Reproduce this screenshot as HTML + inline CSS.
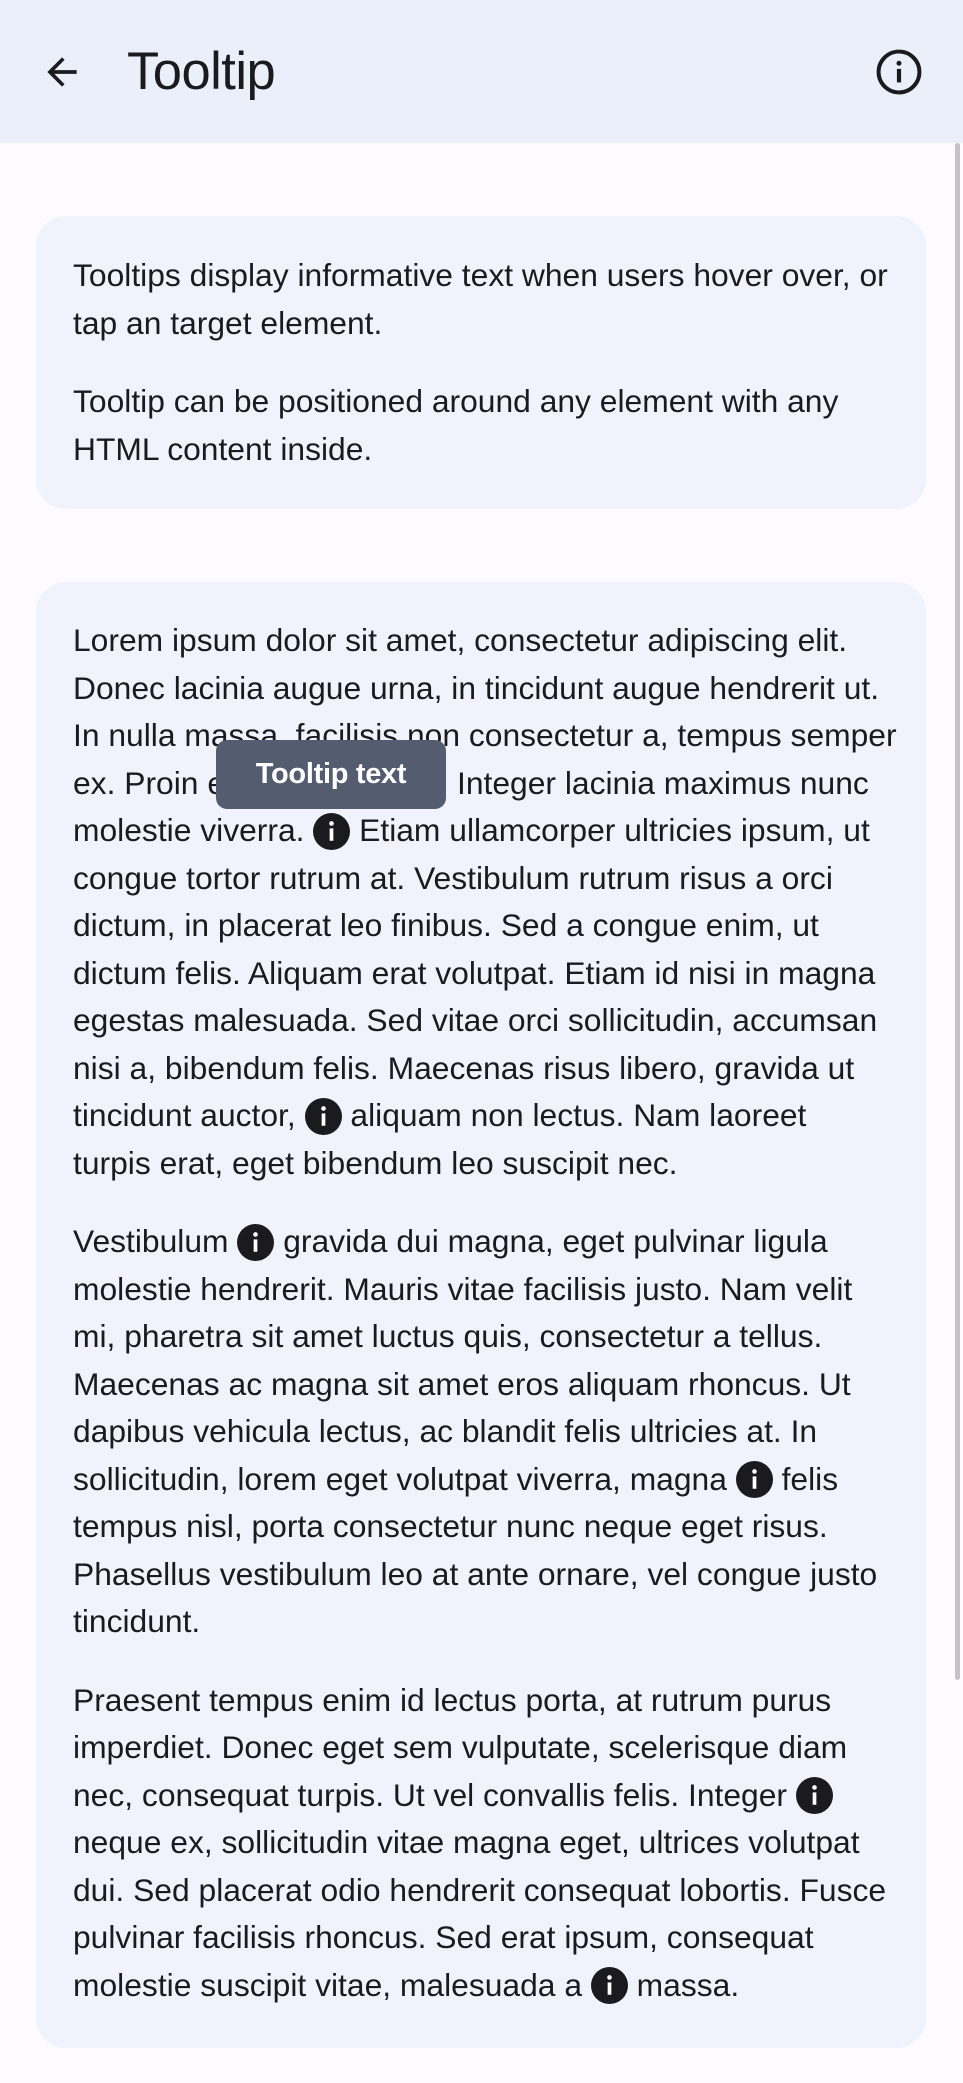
<!DOCTYPE html>
<html><head><meta charset="utf-8"><style>
html,body{margin:0;padding:0}
body{width:963px;height:2083px;background:#fdfbff;font-family:"Liberation Sans",sans-serif;color:#1b1b1f;position:relative;overflow:hidden}
.hdr{position:absolute;left:0;top:0;width:963px;height:143px;background:#eaeff9}
.title{position:absolute;left:127px;top:40px;font-size:52.5px;line-height:64px;letter-spacing:-0.5px}
.sb{position:absolute;left:955px;top:143px;width:5px;height:1537px;background:#c4c4c8;border-radius:3px}
.card{position:absolute;left:36px;width:890px;background:#f0f3fb;border-radius:30px;padding:0 0 0 37px;box-sizing:border-box}
.ln{position:relative;white-space:nowrap;font-size:31.8px;height:47.5px;line-height:47.5px;letter-spacing:0}
.gap{height:31px}
.ic{display:inline-block;width:37px;height:37px;vertical-align:middle;margin-top:-3px}
.tt{position:absolute;left:216px;top:740px;width:230px;height:69px;background:#545c6f;border-radius:11px;color:#fff;font-size:29px;font-weight:bold;text-align:center;line-height:69px;letter-spacing:-0.3px}
</style></head><body>
<div class="hdr">
<svg style="position:absolute;left:40px;top:50px" width="44" height="44" viewBox="0 0 24 24"><path d="M20 11H7.83l5.590-5.59L12 4l-8 8 8 8 1.41-1.41L7.83 13H20v-2z" fill="#1b1b1f"/></svg>
<div class="title">Tooltip</div>
<svg style="position:absolute;left:874px;top:47px" width="50" height="50" viewBox="0 0 24 24"><circle cx="12" cy="12" r="9.8" fill="none" stroke="#1b1b1f" stroke-width="1.9"/><rect x="11" y="10.5" width="2" height="6.5" fill="#1b1b1f"/><circle cx="12" cy="7.8" r="1.2" fill="#1b1b1f"/></svg>
</div>
<div class="sb"></div>

<div class="card" style="top:216px;height:293px;padding-top:36px">
<div class="ln">Tooltips display informative text when users hover over, or</div>
<div class="ln">tap an target element.</div>
<div class="gap"></div>
<div class="ln">Tooltip can be positioned around any element with any</div>
<div class="ln">HTML content inside.</div>
</div>

<div class="card" style="top:582px;height:1466px;padding-top:35px">
<div class="ln">Lorem ipsum dolor sit amet, consectetur adipiscing elit.</div>
<div class="ln">Donec lacinia augue urna, in tincidunt augue hendrerit ut.</div>
<div class="ln">In nulla massa, facilisis non consectetur a, tempus semper</div>
<div class="ln">ex. Proin eget nisl <span style="position:absolute;left:384px">Integer lacinia maximus nunc</span></div>
<div class="ln">molestie viverra. <svg class="ic" viewBox="0 0 24 24"><circle cx="12" cy="12" r="12" fill="#1b1b1f"/><rect x="10.8" y="10" width="2.4" height="8" fill="#fff"/><circle cx="12" cy="6.8" r="1.5" fill="#fff"/></svg> Etiam ullamcorper ultricies ipsum, ut</div>
<div class="ln">congue tortor rutrum at. Vestibulum rutrum risus a orci</div>
<div class="ln">dictum, in placerat leo finibus. Sed a congue enim, ut</div>
<div class="ln">dictum felis. Aliquam erat volutpat. Etiam id nisi in magna</div>
<div class="ln">egestas malesuada. Sed vitae orci sollicitudin, accumsan</div>
<div class="ln">nisi a, bibendum felis. Maecenas risus libero, gravida ut</div>
<div class="ln">tincidunt auctor, <svg class="ic" viewBox="0 0 24 24"><circle cx="12" cy="12" r="12" fill="#1b1b1f"/><rect x="10.8" y="10" width="2.4" height="8" fill="#fff"/><circle cx="12" cy="6.8" r="1.5" fill="#fff"/></svg> aliquam non lectus. Nam laoreet</div>
<div class="ln">turpis erat, eget bibendum leo suscipit nec.</div>
<div class="gap"></div>
<div class="ln">Vestibulum <svg class="ic" viewBox="0 0 24 24"><circle cx="12" cy="12" r="12" fill="#1b1b1f"/><rect x="10.8" y="10" width="2.4" height="8" fill="#fff"/><circle cx="12" cy="6.8" r="1.5" fill="#fff"/></svg> gravida dui magna, eget pulvinar ligula</div>
<div class="ln">molestie hendrerit. Mauris vitae facilisis justo. Nam velit</div>
<div class="ln">mi, pharetra sit amet luctus quis, consectetur a tellus.</div>
<div class="ln">Maecenas ac magna sit amet eros aliquam rhoncus. Ut</div>
<div class="ln">dapibus vehicula lectus, ac blandit felis ultricies at. In</div>
<div class="ln">sollicitudin, lorem eget volutpat viverra, magna <svg class="ic" viewBox="0 0 24 24"><circle cx="12" cy="12" r="12" fill="#1b1b1f"/><rect x="10.8" y="10" width="2.4" height="8" fill="#fff"/><circle cx="12" cy="6.8" r="1.5" fill="#fff"/></svg> felis</div>
<div class="ln">tempus nisl, porta consectetur nunc neque eget risus.</div>
<div class="ln">Phasellus vestibulum leo at ante ornare, vel congue justo</div>
<div class="ln">tincidunt.</div>
<div class="gap"></div>
<div class="ln">Praesent tempus enim id lectus porta, at rutrum purus</div>
<div class="ln">imperdiet. Donec eget sem vulputate, scelerisque diam</div>
<div class="ln">nec, consequat turpis. Ut vel convallis felis. Integer <svg class="ic" viewBox="0 0 24 24"><circle cx="12" cy="12" r="12" fill="#1b1b1f"/><rect x="10.8" y="10" width="2.4" height="8" fill="#fff"/><circle cx="12" cy="6.8" r="1.5" fill="#fff"/></svg></div>
<div class="ln">neque ex, sollicitudin vitae magna eget, ultrices volutpat</div>
<div class="ln">dui. Sed placerat odio hendrerit consequat lobortis. Fusce</div>
<div class="ln">pulvinar facilisis rhoncus. Sed erat ipsum, consequat</div>
<div class="ln">molestie suscipit vitae, malesuada a <svg class="ic" viewBox="0 0 24 24"><circle cx="12" cy="12" r="12" fill="#1b1b1f"/><rect x="10.8" y="10" width="2.4" height="8" fill="#fff"/><circle cx="12" cy="6.8" r="1.5" fill="#fff"/></svg> massa.</div>
</div>

<div class="tt">Tooltip text</div>
</body></html>
